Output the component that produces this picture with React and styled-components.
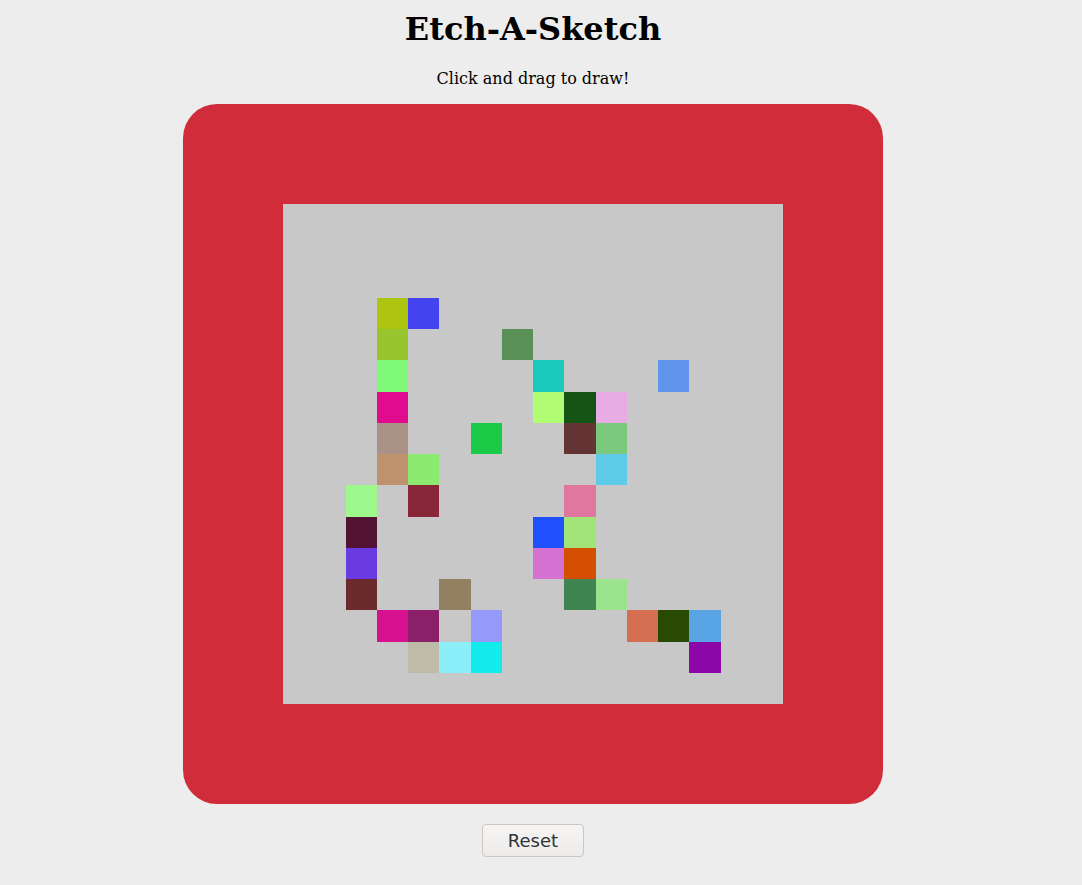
import React, { useState, useEffect } from "react";
import styled, { createGlobalStyle } from "styled-components";

const GRID = 16;

// pre-drawn cells, [col, row, colour]
const initialCells = [
  [3, 3, "#adc410"], [4, 3, "#4343ef"],
  [3, 4, "#98c52e"], [7, 4, "#5a8f55"],
  [3, 5, "#80f878"], [8, 5, "#18c9bc"], [12, 5, "#5e94ea"],
  [3, 6, "#e00b8f"], [8, 6, "#b0fc73"], [9, 6, "#145515"], [10, 6, "#e7ace3"],
  [3, 7, "#ab9287"], [6, 7, "#1bcb47"], [9, 7, "#643435"], [10, 7, "#7bc97d"],
  [3, 8, "#be926c"], [4, 8, "#8bea6f"], [10, 8, "#5ecbe9"],
  [2, 9, "#9ff88c"], [4, 9, "#8a2639"], [9, 9, "#df779e"],
  [2, 10, "#521334"], [8, 10, "#1e50fc"], [9, 10, "#a1e57a"],
  [2, 11, "#6a3be2"], [8, 11, "#d572d1"], [9, 11, "#d44f00"],
  [2, 12, "#6b2a2c"], [5, 12, "#938060"], [9, 12, "#3e8551"], [10, 12, "#9ce38e"],
  [3, 13, "#d6108f"], [4, 13, "#8b1f6a"], [6, 13, "#9599fa"], [11, 13, "#d46f52"], [12, 13, "#284a02"], [13, 13, "#58a4e4"],
  [4, 14, "#bebca8"], [5, 14, "#8ceef9"], [6, 14, "#12edec"], [13, 14, "#8b07a8"],
];

function buildCells() {
  const cells = Array(GRID * GRID).fill(null);
  initialCells.forEach(([c, r, col]) => {
    cells[r * GRID + c] = col;
  });
  return cells;
}

function randomColor() {
  return "#" + Math.floor(Math.random() * 0xffffff).toString(16).padStart(6, "0");
}

const GlobalStyle = createGlobalStyle`
  body {
    margin: 0;
    background: #ededed;
    font-family: "DejaVu Serif", serif;
  }
`;

const Page = styled.div`
  display: flex;
  flex-direction: column;
  align-items: center;
  padding: 10px 16px 20px 0;
`;

const Title = styled.h1`
  margin: 0 0 21px;
  font-size: 32px;
  font-weight: bold;
  color: #000;
`;

const Hint = styled.p`
  margin: 0 0 16px;
  font-size: 16px;
  color: #000;
`;

const Frame = styled.div`
  width: 700px;
  height: 700px;
  box-sizing: border-box;
  padding: 100px;
  background: #d12c3a;
  border-radius: 34px;
`;

const Board = styled.div`
  display: grid;
  grid-template-columns: repeat(${GRID}, 1fr);
  grid-template-rows: repeat(${GRID}, 1fr);
  width: 500px;
  height: 500px;
  background: #c8c8c8;
  user-select: none;
`;

const Cell = styled.div`
  background: ${(p) => p.color || "transparent"};
`;

const ResetButton = styled.button`
  margin-top: 20px;
  width: 102px;
  height: 33px;
  font-family: "DejaVu Sans", sans-serif;
  font-size: 18px;
  color: #2e3436;
  background: linear-gradient(#f6f5f4, #edebe9);
  border: 1px solid #cdc7c2;
  border-radius: 4px;
  cursor: pointer;
`;

export default function App() {
  const [cells, setCells] = useState(buildCells);
  const [drawing, setDrawing] = useState(false);

  useEffect(() => {
    const stop = () => setDrawing(false);
    window.addEventListener("mouseup", stop);
    return () => window.removeEventListener("mouseup", stop);
  }, []);

  const paint = (i) => {
    setCells((prev) => {
      const next = [...prev];
      next[i] = randomColor();
      return next;
    });
  };

  return (
    <Page>
      <GlobalStyle />
      <Title>Etch-A-Sketch</Title>
      <Hint>Click and drag to draw!</Hint>
      <Frame>
        <Board>
          {cells.map((c, i) => (
            <Cell
              key={i}
              color={c}
              onMouseDown={() => {
                setDrawing(true);
                paint(i);
              }}
              onMouseEnter={() => drawing && paint(i)}
            />
          ))}
        </Board>
      </Frame>
      <ResetButton onClick={() => setCells(Array(GRID * GRID).fill(null))}>Reset</ResetButton>
    </Page>
  );
}
